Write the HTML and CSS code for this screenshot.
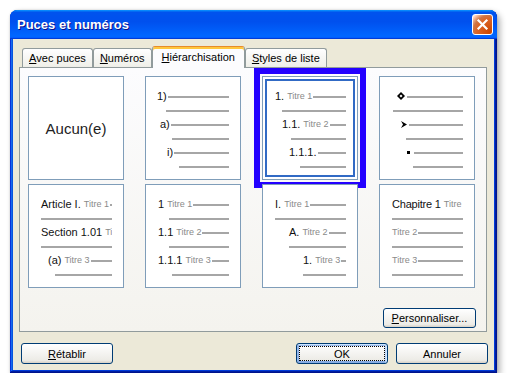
FILE: index.html
```html
<!DOCTYPE html>
<html lang="fr">
<head>
<meta charset="utf-8">
<title>Puces et numéros</title>
<link rel="stylesheet" href="styles.css">
</head>
<body>
<div class="window">
  <div class="titlebar">
    <span class="title">Puces et numéros</span>
    <button class="close" aria-label="Fermer">
      <svg width="13" height="13" viewBox="0 0 13 13"><path d="M2.5 2.5 L10.5 10.5 M10.5 2.5 L2.5 10.5" stroke="#fff" stroke-width="2.2" stroke-linecap="square"/></svg>
    </button>
  </div>
  <div class="content">
    <div class="tabs">
      <div class="tab"><u>A</u>vec puces</div>
      <div class="tab"><u>N</u>uméros</div>
      <div class="tab active"><u>H</u>iérarchisation</div>
      <div class="tab"><u>S</u>tyles de liste</div>
    </div>
    <div class="panel">
      <div class="grid">
        <div class="card none">Aucun(e)</div>

        <div class="card">
          <div class="row i11"><span class="lbl">1)</span><span class="ln"></span></div>
          <div class="row i20"><span class="ln"></span></div>
          <div class="row i14"><span class="lbl">a)</span><span class="ln"></span></div>
          <div class="row i26"><span class="ln"></span></div>
          <div class="row i21"><span class="lbl">i)</span><span class="ln"></span></div>
          <div class="row i33"><span class="ln"></span></div>
        </div>

        <div class="card selected">
          <div class="row i12"><span class="lbl">1.</span><span class="ttl">Titre 1</span><span class="ln"></span></div>
          <div class="row i19"><span class="ln"></span></div>
          <div class="row i19"><span class="lbl">1.1.</span><span class="ttl">Titre 2</span><span class="ln"></span></div>
          <div class="row i28"><span class="ln"></span></div>
          <div class="row i26"><span class="lbl">1.1.1.</span><span class="ln"></span></div>
          <div class="row i37"><span class="ln"></span></div>
          <div class="highlight"></div>
        </div>

        <div class="card">
          <div class="row i17"><svg class="bullet" width="8" height="8" viewBox="0 0 8 8"><path d="M4 0 L8 4 L4 8 L0 4 Z" fill="#000"/><path d="M4 2.5 L5.5 4 L4 5.5 L2.5 4 Z" fill="#fff"/></svg><span class="ln"></span></div>
          <div class="row i13"><span class="ln"></span></div>
          <div class="row i21"><svg class="bullet" width="6" height="7" viewBox="0 0 6 7"><path d="M0 0 L6 3.5 L0 7 L2 3.5 Z" fill="#000"/></svg><span class="ln"></span></div>
          <div class="row i26"><span class="ln"></span></div>
          <div class="row i27"><span class="sq"></span><span class="ln"></span></div>
          <div class="row i33"><span class="ln"></span></div>
        </div>

        <div class="card">
          <div class="row i12"><span class="lbl">Article I.</span><span class="ttl">Titre 1</span><span class="ln"></span></div>
          <div class="row i12"><span class="ln"></span></div>
          <div class="row i12"><span class="lbl">Section 1.01</span><span class="ttl">Ti</span></div>
          <div class="row i12"><span class="ln"></span></div>
          <div class="row i19"><span class="lbl">(a)</span><span class="ttl">Titre 3</span><span class="ln"></span></div>
          <div class="row i26"><span class="ln"></span></div>
        </div>

        <div class="card">
          <div class="row i12"><span class="lbl">1</span><span class="ttl">Titre 1</span><span class="ln"></span></div>
          <div class="row i23"><span class="ln"></span></div>
          <div class="row i12"><span class="lbl">1.1</span><span class="ttl">Titre 2</span><span class="ln"></span></div>
          <div class="row i23"><span class="ln"></span></div>
          <div class="row i12"><span class="lbl">1.1.1</span><span class="ttl">Titre 3</span><span class="ln"></span></div>
          <div class="row i26"><span class="ln"></span></div>
        </div>

        <div class="card">
          <div class="row i12"><span class="lbl">I.</span><span class="ttl">Titre 1</span><span class="ln"></span></div>
          <div class="row i12"><span class="ln"></span></div>
          <div class="row i26"><span class="lbl">A.</span><span class="ttl">Titre 2</span><span class="ln"></span></div>
          <div class="row i26"><span class="ln"></span></div>
          <div class="row i40"><span class="lbl">1.</span><span class="ttl">Titre 3</span><span class="ln"></span></div>
          <div class="row i40"><span class="ln"></span></div>
        </div>

        <div class="card">
          <div class="row i12"><span class="lbl tight">Chapitre 1</span><span class="ttl">Titre</span></div>
          <div class="row i12"><span class="ln"></span></div>
          <div class="row i12"><span class="ttl first">Titre 2</span><span class="ln"></span></div>
          <div class="row i12"><span class="ln"></span></div>
          <div class="row i12"><span class="ttl first">Titre 3</span><span class="ln"></span></div>
          <div class="row i12"><span class="ln"></span></div>
        </div>
      </div>
      <div class="panel-actions">
        <button class="btn wide"><u>P</u>ersonnaliser...</button>
      </div>
    </div>
    <div class="footer">
      <button class="btn"><u>R</u>établir</button>
      <div class="right">
        <button class="btn default">OK</button>
        <button class="btn">Annuler</button>
      </div>
    </div>
  </div>
</div>
</body>
</html>
```

FILE: styles.css
```css
* { box-sizing: border-box; }

html, body {
  margin: 0;
  padding: 0;
  background: #fff;
}

body {
  font-family: "Liberation Sans", Arial, sans-serif;
  font-size: 11px;
  color: #000;
}

u { text-decoration: underline; text-underline-offset: 1px; }

.window {
  margin: 10px 0 0 10px;
  width: 487px;
  height: 363px;
  background: #ece9d8;
  border-radius: 8px 8px 0 0;
  padding: 0 3px 3px;
  display: flex;
  flex-direction: column;
  box-shadow:
    inset -1px -1px #00138c,
    inset 1px 1px #0831d9,
    inset -2px -2px #001ea0,
    inset 2px 2px #166aee,
    inset -3px -3px #003bda,
    inset 3px 3px #0855dd,
    3px 3px 6px rgba(0, 0, 0, 0.3),
    0 0 2px rgba(0, 0, 0, 0.2);
}

.titlebar {
  height: 29px;
  margin: 0 -3px;
  padding: 0 4px 0 7px;
  display: flex;
  align-items: center;
  justify-content: space-between;
  border-radius: 7px 7px 0 0;
  background: linear-gradient(180deg, #0997ff, #0053ee 8%, #0050ee 40%, #0066ff 88%, #0066ff 93%, #005bff 95%, #003dd7 96%, #003dd7);
}

.title {
  color: #fff;
  font-weight: bold;
  font-size: 13px;
  text-shadow: 1px 1px #0f1089;
}

.close {
  width: 21px;
  height: 21px;
  padding: 0;
  border: 1px solid #fff;
  border-radius: 3px;
  display: flex;
  align-items: center;
  justify-content: center;
  background: radial-gradient(circle at 90% 90%, #cc4600 0%, #dc6527 55%, #cd7546 70%, #ffccb2 90%, #fff 100%);
}

.content {
  flex: 1;
  padding: 7px 7px 0 6px;
  display: flex;
  flex-direction: column;
}

.tabs {
  display: flex;
  align-items: flex-end;
  height: 21px;
  padding-left: 3px;
  position: relative;
  z-index: 2;
}

.tab {
  height: 19px;
  padding: 0 6px;
  border: 1px solid #919b9c;
  border-bottom: none;
  border-radius: 3px 3px 0 0;
  background: linear-gradient(180deg, #fff, #fafaf9 26%, #f0f0ea 95%, #ecebe5);
  display: flex;
  align-items: center;
  white-space: nowrap;
}

.tab.active {
  height: 22px;
  margin-bottom: -1px;
  padding: 0 9px 2px;
  background: #fcfcfe;
  border-top: 1px solid #e68b2c;
  box-shadow: inset 0 2px #ffc73c;
}

.panel {
  height: 265px;
  border: 1px solid #919b9c;
  background: linear-gradient(180deg, #fcfcfe, #f4f3ee);
  padding: 8px 10px 2px 8px;
  display: flex;
  flex-direction: column;
}

.grid {
  display: grid;
  grid-template-columns: repeat(4, 96px);
  grid-auto-rows: 104px;
  column-gap: 21px;
  row-gap: 4px;
}

.card {
  position: relative;
  background: #fff;
  border: 1px solid #7f9db9;
  padding: 12px 11px 0 0;
  display: flex;
  flex-direction: column;
}

.card.none {
  padding: 0;
  align-items: center;
  justify-content: center;
  font-size: 15px;
  color: #222;
}

.card.selected {
  box-shadow: inset 0 0 0 2px #fff, inset 0 0 0 4px #316ac5;
}

.highlight {
  position: absolute;
  left: -9px;
  top: -9px;
  width: 112px;
  height: 120px;
  border: 6px solid #2300ff;
  pointer-events: none;
}

.row {
  height: 14px;
  display: flex;
  align-items: center;
  overflow: hidden;
  white-space: nowrap;
}

.lbl {
  flex: none;
  font-size: 11px;
  line-height: 14px;
  color: #111;
}

.lbl.tight { letter-spacing: -0.2px; }

.ttl {
  flex: none;
  font-size: 9px;
  color: #8a8a8a;
  margin-left: 3px;
}

.ttl.first { margin-left: 0; }

.ln {
  flex: 1 1 0;
  min-width: 0;
  height: 2px;
  margin-top: 1px;
  margin-left: 1px;
  background: #a6a6a6;
}

.row > .ln:first-child { margin-left: 0; }

.bullet { flex: none; margin-right: 1px; }

.sq {
  flex: none;
  width: 3px;
  height: 3px;
  background: #000;
  margin-right: 3px;
}

.i11 { padding-left: 11px; }
.i12 { padding-left: 12px; }
.i13 { padding-left: 13px; }
.i14 { padding-left: 14px; }
.i17 { padding-left: 17px; }
.i19 { padding-left: 19px; }
.i20 { padding-left: 20px; }
.i21 { padding-left: 21px; }
.i23 { padding-left: 23px; }
.i26 { padding-left: 26px; }
.i27 { padding-left: 27px; }
.i28 { padding-left: 28px; }
.i33 { padding-left: 33px; }
.i37 { padding-left: 37px; }
.i40 { padding-left: 40px; }

.panel-actions {
  display: flex;
  justify-content: flex-end;
  margin-top: 20px;
}

.btn {
  width: 92px;
  height: 21px;
  padding: 0;
  font-family: inherit;
  font-size: 11px;
  color: #000;
  border: 1px solid #003c74;
  border-radius: 3px;
  background: linear-gradient(180deg, #fff, #ecebe6 86%, #d6d0c5);
}

.btn.wide {
  width: 93px;
  height: 20px;
}

.btn.default {
  box-shadow: inset -1px 1px #cee7ff, inset 1px 2px #98b8ea, inset -2px 2px #bcd4f6, inset 1px -1px #89ade4, inset 2px -2px #89ade4;
  outline: 1px dotted #000;
  outline-offset: -4px;
}

.footer {
  margin: 11px -1px 0 2px;
  display: flex;
  justify-content: space-between;
}

.footer .right {
  display: flex;
  gap: 8px;
}
```
